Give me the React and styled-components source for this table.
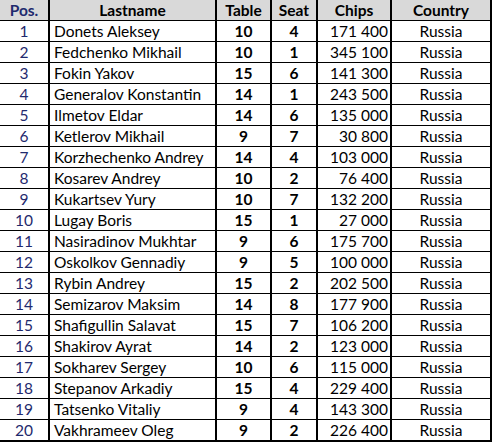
import React from "react";
import styled, { createGlobalStyle } from "styled-components";

const Global = createGlobalStyle`
  html, body { margin: 0; padding: 0; background: #ffffff; }
  body { font-family: Lato, "Open Sans", "Liberation Sans", sans-serif; }
`;

const rows = [
  [1, "Donets Aleksey", 10, 4, "171 400"],
  [2, "Fedchenko Mikhail", 10, 1, "345 100"],
  [3, "Fokin Yakov", 15, 6, "141 300"],
  [4, "Generalov Konstantin", 14, 1, "243 500"],
  [5, "Ilmetov Eldar", 14, 6, "135 000"],
  [6, "Ketlerov Mikhail", 9, 7, "30 800"],
  [7, "Korzhechenko Andrey", 14, 4, "103 000"],
  [8, "Kosarev Andrey", 10, 2, "76 400"],
  [9, "Kukartsev Yury", 10, 7, "132 200"],
  [10, "Lugay Boris", 15, 1, "27 000"],
  [11, "Nasiradinov Mukhtar", 9, 6, "175 700"],
  [12, "Oskolkov Gennadiy", 9, 5, "100 000"],
  [13, "Rybin Andrey", 15, 2, "202 500"],
  [14, "Semizarov Maksim", 14, 8, "177 900"],
  [15, "Shafigullin Salavat", 15, 7, "106 200"],
  [16, "Shakirov Ayrat", 14, 2, "123 000"],
  [17, "Sokharev Sergey", 10, 6, "115 000"],
  [18, "Stepanov Arkadiy", 15, 4, "229 400"],
  [19, "Tatsenko Vitaliy", 9, 4, "143 300"],
  [20, "Vakhrameev Oleg", 9, 2, "226 400"],
];

const cols = [50, 167, 55, 46, 74, 100];

const Table = styled.table`
  border-collapse: separate;
  border-spacing: 0;
  table-layout: fixed;
  width: 492px;
  font-size: 15.5px;
  color: #000;
`;

const HeadCell = styled.th`
  height: 20px;
  padding: 0;
  background: #d9d9d9;
  font-weight: 700;
  text-align: center;
  color: ${(p) => (p.$navy ? "#1f2a6e" : "#000")};
  border-right: 2px solid #000;
  border-bottom: 1px solid #000;
  line-height: 20px;
  white-space: nowrap;
  overflow: hidden;
`;

const Cell = styled.td`
  height: 20px;
  padding: 0 ${(p) => (p.$align === "right" ? "2px" : "0")} 0 ${(p) => (p.$align === "left" ? "4px" : "0")};
  text-align: ${(p) => p.$align};
  font-weight: ${(p) => (p.$bold ? 700 : 400)};
  color: ${(p) => (p.$navy ? "#1f2a6e" : "#000")};
  border-right: 2px solid #000;
  border-bottom: ${(p) => (p.$last ? "2px" : "1px")} solid #000;
  line-height: 20px;
  white-space: nowrap;
  overflow: hidden;
`;

export default function App() {
  return (
    <>
      <Global />
      <Table>
        <colgroup>
          {cols.map((w, i) => (
            <col key={i} style={{ width: w }} />
          ))}
        </colgroup>
        <thead>
          <tr>
            <HeadCell $navy>Pos.</HeadCell>
            <HeadCell>Lastname</HeadCell>
            <HeadCell>Table</HeadCell>
            <HeadCell>Seat</HeadCell>
            <HeadCell>Chips</HeadCell>
            <HeadCell>Country</HeadCell>
          </tr>
        </thead>
        <tbody>
          {rows.map((r, i) => {
            const last = i === rows.length - 1;
            return (
              <tr key={r[0]}>
                <Cell $align="center" $navy $last={last}>{r[0]}</Cell>
                <Cell $align="left" $last={last}>{r[1]}</Cell>
                <Cell $align="center" $bold $last={last}>{r[2]}</Cell>
                <Cell $align="center" $bold $last={last}>{r[3]}</Cell>
                <Cell $align="right" $last={last}>{r[4]}</Cell>
                <Cell $align="center" $last={last}>Russia</Cell>
              </tr>
            );
          })}
        </tbody>
      </Table>
    </>
  );
}
